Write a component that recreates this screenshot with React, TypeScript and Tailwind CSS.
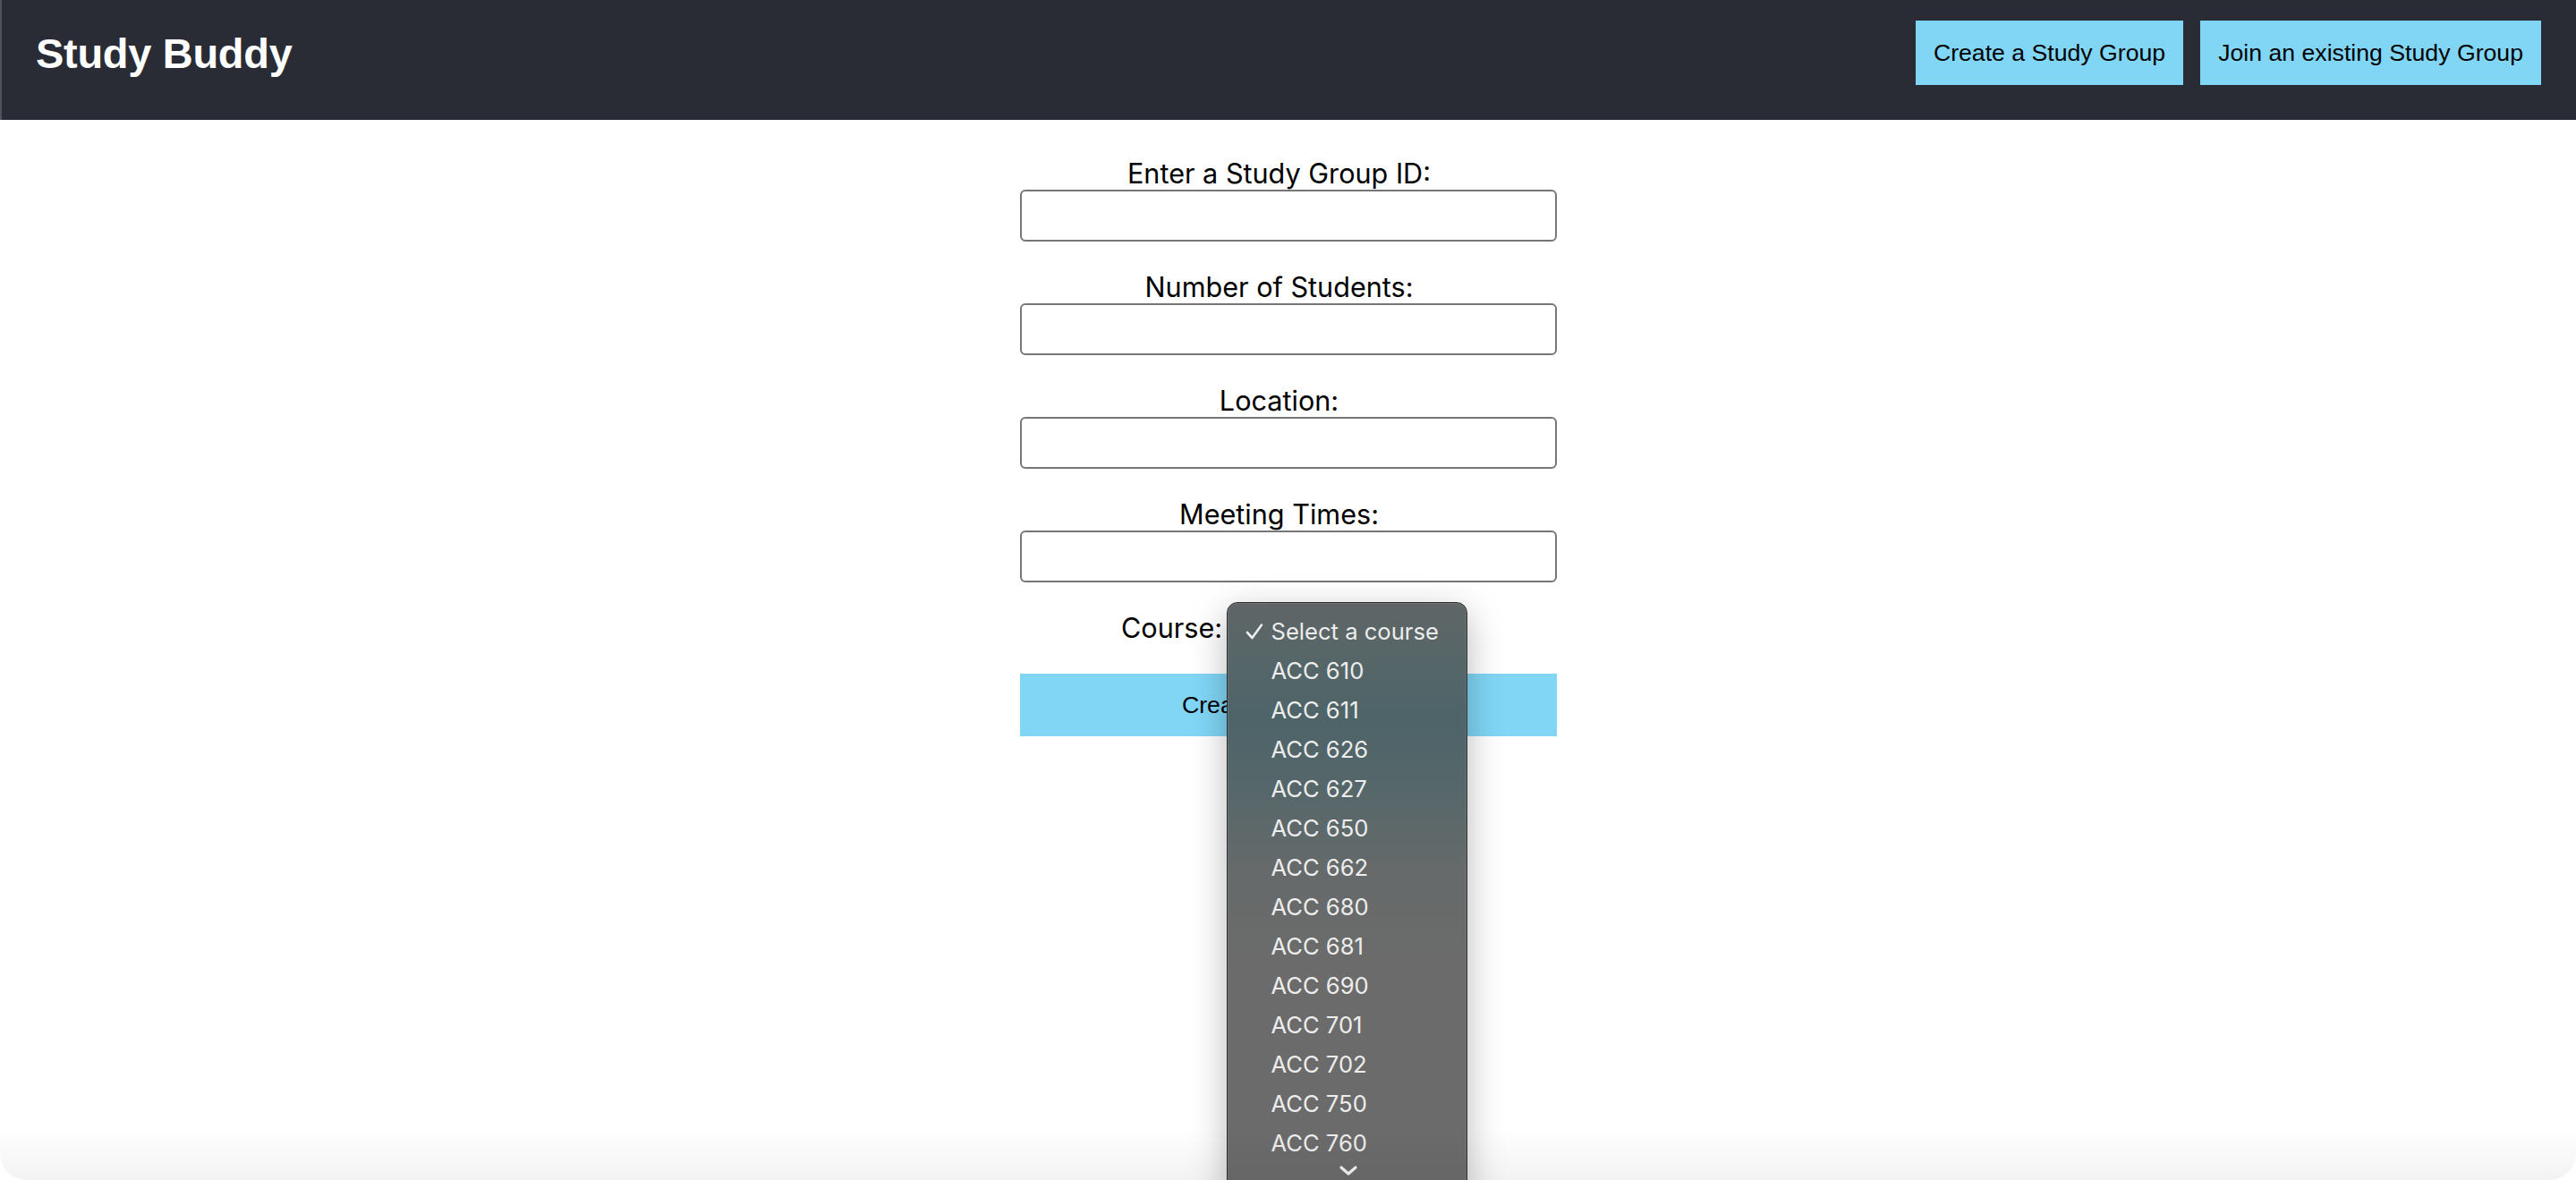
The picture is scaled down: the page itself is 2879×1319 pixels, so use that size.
import { useState } from "react";

const courses = ["ACC 610", "ACC 611", "ACC 626", "ACC 627", "ACC 650", "ACC 662", "ACC 680", "ACC 681", "ACC 690", "ACC 701", "ACC 702", "ACC 750", "ACC 760"];

const fields = ["Enter a Study Group ID:", "Number of Students:", "Location:", "Meeting Times:"];

function CourseMenu() {
  return (
    <div className="absolute left-[231px] top-[-11px] w-[269px] h-[680px] rounded-[12px] border border-[#2b2b2b] shadow-[0_12px_40px_rgba(0,0,0,0.28)] overflow-hidden bg-[linear-gradient(to_bottom,#606566_0px,#556668_70px,#4e6469_130px,#56676a_210px,#666a6a_300px,#6b6b6b_400px,#6b6b6b_100%)]">
      <div className="h-full rounded-[11px] border border-[#7b7e7f]/60 pt-[9px] text-[25.6px] text-[#ededed]" style={{ fontFamily: "Inter, 'Noto Sans', sans-serif" }}>
        <div className="h-[44px] flex items-center relative pl-[48px]">
          <svg className="absolute left-[19px] top-[12px]" width="20" height="20" viewBox="0 0 20 20" fill="none">
            <path d="M2 11 L7.5 17 L18 2.5" stroke="#ededed" strokeWidth="2.6" strokeLinecap="round" strokeLinejoin="round" />
          </svg>
          Select a course
        </div>
        {courses.map((c) => (
          <div key={c} className="h-[44px] flex items-center pl-[48px]">{c}</div>
        ))}
      </div>
      {/* scroll arrow */}
      <svg className="absolute left-[124px] top-[628px]" width="22" height="14" viewBox="0 0 22 14" fill="none">
        <path d="M3 3 L11 10 L19 3" stroke="#f2f2f2" strokeWidth="3.2" strokeLinecap="round" strokeLinejoin="round" />
      </svg>
    </div>
  );
}

export default function App() {
  const [values, setValues] = useState<string[]>(["", "", "", ""]);

  return (
    <div className="relative h-[1319px] w-full bg-white overflow-hidden">
      {/* HEADER */}
      <header className="h-[134px] flex items-start justify-between bg-[#292c34] border-l-2 border-[#4f5258] pl-[38px] pr-[39px]">
        <h1 className="mt-[32px] text-[47px] leading-[56px] font-bold text-white tracking-[-0.3px]" style={{ fontFamily: "'Liberation Sans', Arial, sans-serif" }}>
          Study Buddy
        </h1>
        <div className="flex gap-[19px] mt-[23px]" style={{ fontFamily: "'Liberation Sans', Arial, sans-serif" }}>
          <button className="h-[72px] px-[20px] bg-[#81d6f6] text-black text-[26.67px]">Create a Study Group</button>
          <button className="h-[72px] px-[20px] bg-[#81d6f6] text-black text-[26.67px]">Join an existing Study Group</button>
        </div>
      </header>

      {/* FORM */}
      <form className="w-[600px] mx-auto pt-[42px] relative" style={{ fontFamily: "Inter, 'Noto Sans', sans-serif" }} onSubmit={(e) => e.preventDefault()}>
        {fields.map((f, i) => (
          <div key={f} className="mb-[33px]">
            <label className="block text-center text-[30.6px] leading-[36px] text-black pr-[20px]">{f}</label>
            <input
              value={values[i]}
              onChange={(e) => setValues(values.map((v, j) => (j === i ? e.target.value : v)))}
              className="block w-[600px] h-[58px] border-2 border-[#767676] rounded-[6px] bg-white"
            />
          </div>
        ))}

        <div className="relative h-[36px] flex items-center justify-center pr-[20px]">
          <span className="text-[30.6px] leading-[36px] text-black">Course:</span>
          <div className="ml-[8px] w-[232px] h-[36px] rounded-[6px] bg-[#e9e9ed]" />
          <CourseMenu />
        </div>

        <button
          type="submit"
          className="mt-[33px] w-[600px] h-[70px] bg-[#81d6f6] text-black text-[26.67px]"
          style={{ fontFamily: "'Liberation Sans', Arial, sans-serif" }}
        >
          Create Study Group
        </button>
      </form>

      {/* bottom window shadow */}
      <div className="absolute bottom-0 left-0 right-0 h-[56px] rounded-b-[30px] bg-gradient-to-b from-transparent to-black/[0.05] pointer-events-none" />
    </div>
  );
}
